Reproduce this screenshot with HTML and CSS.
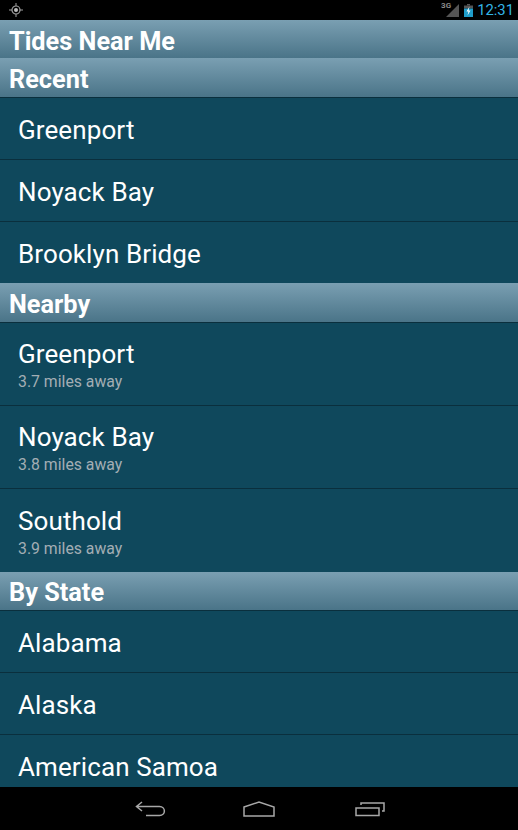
FILE: index.html
```html
<!DOCTYPE html>
<html lang="en">

<head>
    <meta charset="UTF-8">
    <meta name="viewport" content="width=device-width, initial-scale=1.0">
    <title>Tides Near Me</title>
    <link rel="stylesheet" href="styles.css">
</head>

<body>
    <div class="status-bar">
        <svg class="gps-icon" width="14" height="14" viewBox="0 0 14 14">
            <circle cx="7" cy="7" r="4" fill="none" stroke="#a0a0a0" stroke-width="1.2"/>
            <circle cx="7" cy="7" r="2" fill="#bdbdbd"/>
            <path d="M7 0v3M7 11v3M0 7h3M11 7h3" stroke="#a0a0a0" stroke-width="1"/>
        </svg>
        <div class="status-right">
            <span class="net-label">3G</span>
            <svg width="13" height="13" viewBox="0 0 13 13">
                <path d="M13 0v13H0z" fill="#555"/>
            </svg>
            <svg class="battery" width="9" height="13" viewBox="0 0 9 13">
                <rect x="3" y="0" width="3" height="1.500" fill="#555"/>
                <rect x="0" y="1.500" width="9" height="3" fill="#555"/>
                <rect x="0" y="4.500" width="9" height="8.500" fill="#1f9cc9"/>
                <path d="M5.500 2.500L2.500 7.500h2L3.500 11.500l3-5h-2z" fill="#fff"/>
            </svg>
            <span class="clock">12:31</span>
        </div>
    </div>

    <div class="title-bar">Tides Near Me</div>

    <div class="list">
        <div class="section">Recent</div>
        <div class="row">Greenport</div>
        <div class="row">Noyack Bay</div>
        <div class="row last">Brooklyn Bridge</div>

        <div class="section">Nearby</div>
        <div class="row tall">Greenport<span class="distance">3.7 miles away</span></div>
        <div class="row tall">Noyack Bay<span class="distance">3.8 miles away</span></div>
        <div class="row tall last">Southold<span class="distance">3.9 miles away</span></div>

        <div class="section">By State</div>
        <div class="row">Alabama</div>
        <div class="row">Alaska</div>
        <div class="row">American Samoa</div>
    </div>

    <div class="nav-bar">
        <svg width="32" height="16" viewBox="0 0 32 16" fill="none" stroke="#a8a8a8" stroke-width="1.500">
            <path d="M7 1L1.500 5.500L7 10M1.500 5.500H24.500C31 5.500 31 14.500 24.500 14.500H11"/>
        </svg>
        <svg width="32" height="16" viewBox="0 0 32 16" fill="none" stroke="#a8a8a8" stroke-width="1.500">
            <path d="M1 6L16 1L31 6V15H1z"/>
        </svg>
        <svg class="recents" width="30" height="16" viewBox="0 0 30 16" fill="none" stroke="#a8a8a8" stroke-width="1.500">
            <path d="M1 7H24V14.500H1z"/>
            <path d="M6 4V2H29V10H27"/>
        </svg>
    </div>
</body>

</html>
```

FILE: styles.css
```css
body {
    margin: 0;
    height: 830px;
    display: flex;
    flex-direction: column;
    overflow: hidden;
    background: #0f485c;
    font-family: Roboto, "Liberation Sans", sans-serif;
    color: white;
}

.status-bar {
    height: 20px;
    flex: none;
    background: black;
    display: flex;
    align-items: center;
    justify-content: space-between;
    padding: 0 4px 0 9px;
}

.status-right {
    display: flex;
    align-items: center;
    gap: 5px;
}

.net-label {
    font-size: 8px;
    font-weight: bold;
    color: #8a8a8a;
    margin-right: -10px;
    align-self: flex-start;
}

.clock {
    font-size: 14.800px;
    color: #33b5e5;
    margin-left: -1px;
}

.title-bar, .section {
    flex: none;
    box-sizing: border-box;
    background: linear-gradient(#7a9fb2, #4a7488);
    font-weight: bold;
    font-size: 25.300px;
    padding: 4px 0 0 9px;
    display: flex;
    align-items: center;
}

.title-bar {
    height: 38px;
}

.section {
    height: 39.600px;
    border-bottom: 1px solid #0a2f3d;
}

.list {
    flex: 1;
    overflow: hidden;
    min-height: 0;
}

.row {
    box-sizing: border-box;
    height: 62px;
    padding: 3px 0 0 18px;
    border-bottom: 1px solid #0a2f3d;
    font-size: 26px;
    letter-spacing: 0.100px;
    display: flex;
    flex-direction: column;
    justify-content: center;
}

.row.last {
    height: 61.400px;
    border-bottom: none;
}

.row.tall {
    height: 83px;
}

.distance {
    font-size: 15.800px;
    letter-spacing: 0;
    color: #a3aeb4;
    margin-top: 3px;
}

.nav-bar {
    height: 43px;
    flex: none;
    background: black;
    display: flex;
    align-items: center;
    justify-content: center;
    gap: 76px;
    padding-left: 2px;
}

.recents {
    margin-left: 4px;
}
```
